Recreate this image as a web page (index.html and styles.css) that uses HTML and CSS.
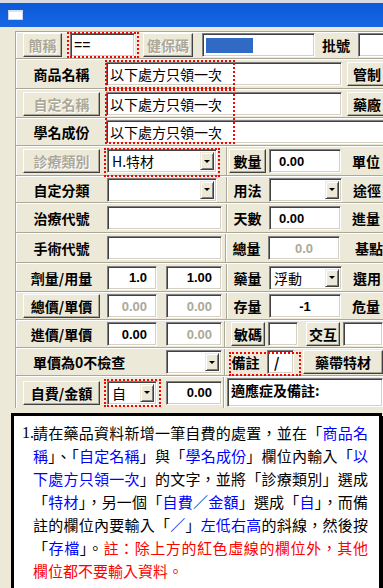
FILE: index.html
```html
<!DOCTYPE html>
<html lang="zh-Hant">
<head>
    <meta charset="UTF-8">
    <meta name="viewport" content="width=device-width, initial-scale=1.0">
    <title>藥品資料</title>
    <link rel="stylesheet" href="styles.css">
</head>
<body>
    <div class="top-strip"></div>
    <div class="titlebar"><span class="win-icon"></span></div>

    <div class="form">
        <div class="row r0">
            <div class="btn dis short-btn">簡稱</div>
            <div class="inp code-inp">==</div>
            <div class="btn dis nhi-btn">健保碼</div>
            <div class="inp nhi-inp"><span class="hl"></span></div>
            <div class="lbl batch-lbl">批號</div>
            <div class="inp batch-inp"></div>
        </div>

        <div class="row r1">
            <div class="lbl name-lbl">商品名稱</div>
            <div class="inp name-inp">以下處方只領一次</div>
            <div class="btn side-btn">管制</div>
        </div>
        <div class="row r2">
            <div class="btn dis name-lbl">自定名稱</div>
            <div class="inp name-inp">以下處方只領一次</div>
            <div class="btn side-btn">藥廠</div>
        </div>
        <div class="row r3">
            <div class="lbl name-lbl">學名成份</div>
            <div class="inp name-inp wide">以下處方只領一次</div>
        </div>

        <div class="row r4">
            <div class="left">
                <div class="btn dis name-lbl">診療類別</div>
                <div class="sel long-sel"><span class="sel-text">H.特材</span><span class="arrow"></span></div>
            </div>
            <div class="right">
                <div class="btn qty-btn">數量</div>
                <div class="inp qty-inp num">0.00</div>
                <div class="lbl tail-lbl">單位</div>
            </div>
        </div>
        <div class="row r5">
            <div class="left">
                <div class="lbl name-lbl">自定分類</div>
                <div class="sel long-sel"><span class="sel-text"></span><span class="arrow"></span></div>
            </div>
            <div class="right">
                <div class="lbl qty-lbl">用法</div>
                <div class="sel qty-sel"><span class="sel-text"></span><span class="arrow"></span></div>
                <div class="lbl tail-lbl">途徑</div>
            </div>
        </div>
        <div class="row r6">
            <div class="left">
                <div class="lbl name-lbl">治療代號</div>
                <div class="inp code-long"></div>
            </div>
            <div class="right">
                <div class="lbl qty-lbl">天數</div>
                <div class="inp qty-inp num">0.00</div>
                <div class="lbl tail-lbl">進量</div>
            </div>
        </div>
        <div class="row r7">
            <div class="left">
                <div class="lbl name-lbl">手術代號</div>
                <div class="inp code-long"></div>
            </div>
            <div class="right">
                <div class="lbl qty-lbl">總量</div>
                <div class="inp qty-inp num off center">0.0</div>
                <div class="lbl tail-lbl far">基點</div>
            </div>
        </div>
        <div class="row r8">
            <div class="left">
                <div class="lbl name-lbl">劑量/用量</div>
                <div class="inp pair-a num end">1.0</div>
                <div class="inp pair-b num end">1.00</div>
            </div>
            <div class="right">
                <div class="lbl qty-lbl">藥量</div>
                <div class="sel qty-sel"><span class="sel-text">浮動</span><span class="arrow"></span></div>
                <div class="lbl tail-lbl">選用</div>
            </div>
        </div>
        <div class="row r9">
            <div class="left">
                <div class="btn name-lbl">總價/單價</div>
                <div class="inp pair-a num end off">0.00</div>
                <div class="inp pair-b num end off">0.00</div>
            </div>
            <div class="right">
                <div class="lbl qty-lbl">存量</div>
                <div class="inp qty-inp num center">-1</div>
                <div class="lbl tail-lbl">危量</div>
            </div>
        </div>
        <div class="row r10">
            <div class="left">
                <div class="lbl name-lbl">進價/單價</div>
                <div class="inp pair-a num end">0.00</div>
                <div class="inp pair-b num end off">0.00</div>
            </div>
            <div class="right">
                <div class="btn allergy-btn">敏碼</div>
                <div class="inp allergy-inp"></div>
                <div class="btn inter-btn">交互</div>
                <div class="inp inter-inp"></div>
            </div>
        </div>
        <div class="row r11">
            <div class="left">
                <div class="lbl check-lbl">單價為0不檢查</div>
                <div class="sel pair-b"><span class="sel-text"></span><span class="arrow"></span></div>
            </div>
            <div class="right">
                <div class="lbl memo-lbl">備註</div>
                <div class="inp memo-inp">/</div>
                <div class="btn tape-btn">藥帶特材</div>
            </div>
        </div>
        <div class="row r12">
            <div class="left">
                <div class="btn name-lbl">自費/金額</div>
                <div class="sel pair-a"><span class="sel-text">自</span><span class="arrow"></span></div>
                <div class="inp pair-b num end">0.00</div>
            </div>
            <div class="right">
                <div class="inp note-area">適應症及備註:</div>
            </div>
        </div>
    </div>

    <!-- 紅色虛線框 -->
    <div class="mark mark-code"></div>
    <div class="mark mark-name"></div>
    <div class="mark mark-generic"></div>
    <div class="mark mark-type"></div>
    <div class="mark mark-memo"></div>
    <div class="mark mark-self"></div>

    <div class="note">
        <span class="note-no">1.</span>
        <div class="note-lines">
            <div class="line">請在藥品資料新增一筆自費的處置，並在「<b>商品名</b></div>
            <div class="line"><b>稱</b>」、「<b>自定名稱</b>」與「<b>學名成份</b>」欄位內輸入「<b>以</b></div>
            <div class="line"><b>下處方只領一次</b>」的文字，並將「診療類別」選成</div>
            <div class="line">「<b>特材</b>」，另一個「<b>自費／金額</b>」選成「<b>自</b>」，而備</div>
            <div class="line">註的欄位內要輸入「<b>／</b>」<b>左低右高</b>的斜線，然後按</div>
            <div class="line">「<b>存檔</b>」。<i>註：除上方的紅色虛線的欄位外，其他</i></div>
            <div class="line last"><i>欄位都不要輸入資料。</i></div>
        </div>
    </div>
</body>
</html>
```

FILE: styles.css
```css
body {
    margin: 0;
    width: 383px;
    height: 588px;
    overflow: hidden;
    position: relative;
    background-color: #ece9d8;
    font-family: "Noto Sans CJK TC", "Liberation Sans", sans-serif;
    font-size: 14px;
    color: #000;
}

.top-strip {
    height: 3px;
    background-color: #d8dbe4;
}

.titlebar {
    height: 24px;
    background: linear-gradient(#0a5bd9, #1866e4);
    display: flex;
    align-items: center;
    padding-left: 8px;
}

.win-icon {
    width: 13px;
    height: 7px;
    background-color: #fff;
    border: 1px solid #c9d3ea;
    border-top: 2px solid #d7e0f4;
}

.form {
    margin: 4px 0 0 15px;
    border-top: 1px solid #aca899;
    border-left: 1px solid #aca899;
    box-shadow: inset 1px 1px #fff;
}

.row {
    display: flex;
    align-items: center;
    box-sizing: border-box;
    box-shadow: inset 0 -1px #fff, inset 0 -2px #aca899;
    padding-bottom: 2px;
}

.r0 { height: 28px; }
.r1 { height: 30px; }
.r2 { height: 29px; }
.r3 { height: 28px; }
.r4 { height: 30px; }
.r5 { height: 27px; }
.r6 { height: 30px; }
.r7 { height: 30px; }
.r8 { height: 29px; }
.r9 { height: 28px; }
.r10 { height: 28px; }
.r11 { height: 28px; }
.r12 { height: 31px; box-shadow: none; padding-bottom: 0; }

.left {
    width: 210px;
    height: 100%;
    display: flex;
    align-items: center;
}

.right {
    flex: 1;
    height: 100%;
    display: flex;
    align-items: center;
    border-left: 1px solid #aca899;
    box-shadow: inset 1px 0 #fff;
}

/* 控制項 */
.btn {
    height: 24px;
    box-sizing: border-box;
    border: 1px solid;
    border-color: #fff #404040 #404040 #fff;
    box-shadow: inset -1px -1px #aca899;
    background-color: #ece9d8;
    font-weight: bold;
    display: flex;
    align-items: center;
    justify-content: center;
    white-space: nowrap;
    overflow: hidden;
    flex-shrink: 0;
}

.btn.dis {
    color: #aca899;
    text-shadow: 1px 1px #fff;
}

.lbl {
    font-weight: bold;
    white-space: nowrap;
    flex-shrink: 0;
    text-align: center;
}

.inp {
    height: 24px;
    box-sizing: border-box;
    background-color: #fff;
    border: 1px solid;
    border-color: #808080 #fff #fff #808080;
    box-shadow: inset 1px 1px #404040, inset -1px -1px #d4d0c8;
    padding: 0 3px;
    display: flex;
    align-items: center;
    white-space: nowrap;
    overflow: hidden;
    flex-shrink: 0;
}

.num {
    font-family: "Liberation Sans", sans-serif;
    font-weight: bold;
    font-size: 13px;
    padding-left: 9px;
}

.num.end {
    justify-content: flex-end;
    padding-right: 9px;
}

.num.center {
    justify-content: center;
    padding-left: 3px;
}

.off {
    color: #aca899;
}

.sel {
    height: 24px;
    box-sizing: border-box;
    background-color: #fff;
    border: 1px solid;
    border-color: #808080 #fff #fff #808080;
    box-shadow: inset 1px 1px #404040, inset -1px -1px #d4d0c8;
    display: flex;
    align-items: center;
    padding: 2px;
    flex-shrink: 0;
}

.sel-text {
    flex: 1;
    padding-left: 2px;
    white-space: nowrap;
}

.arrow {
    width: 14px;
    height: 18px;
    box-sizing: border-box;
    border: 1px solid;
    border-color: #ece9d8 #404040 #404040 #ece9d8;
    box-shadow: inset 1px 1px #fff, inset -1px -1px #808080;
    background-color: #ece9d8;
    display: flex;
    align-items: center;
    justify-content: center;
}

.arrow::after {
    content: "";
    border-left: 3px solid transparent;
    border-right: 3px solid transparent;
    border-top: 3px solid #000;
}

/* 位置與寬度 */
.short-btn { width: 39px; margin-left: 7px; }
.code-inp { width: 65px; margin-left: 8px; font-family: "Liberation Sans", sans-serif; }
.nhi-btn { width: 50px; margin-left: 8px; }
.nhi-inp { width: 113px; margin-left: 9px; }
.batch-lbl { margin-left: 5px; width: 32px; }
.batch-inp { width: 40px; margin-left: 6px; }

.hl {
    width: 47px;
    height: 15px;
    background-color: #316ac5;
}

.name-lbl { width: 77px; margin-left: 7px; }
.name-inp { width: 236px; margin-left: 6px; }
.name-inp.wide { width: 280px; }
.side-btn { width: 40px; margin-left: 5px; }

.long-sel { width: 110px; margin-left: 7px; }
.code-long { width: 115px; margin-left: 7px; }
.pair-a { width: 50px; margin-left: 7px; }
.pair-b { width: 56px; margin-left: 9px; }
.check-lbl { width: 133px; margin-left: 17px; text-align: left; }
.check-lbl + .pair-b { margin-left: 0; }

.qty-btn { width: 37px; margin-left: 2px; }
.qty-lbl { width: 37px; margin-left: 2px; }
.qty-inp { width: 72px; margin-left: 3px; }
.qty-sel { width: 73px; margin-left: 3px; }
.tail-lbl { margin-left: 11px; }
.tail-lbl.far { margin-left: 15px; }

.allergy-btn { width: 34px; margin-left: 6px; }
.allergy-inp { width: 30px; margin-left: 3px; }
.inter-btn { width: 34px; margin-left: 8px; }
.inter-inp { width: 40px; margin-left: 3px; }

.memo-lbl { width: 37px; margin-left: 2px; }
.memo-inp { width: 27px; margin-left: 3px; font-weight: bold; padding-left: 6px; }
.tape-btn { width: 80px; margin-left: 9px; }

.note-area {
    width: 156px;
    height: 29px;
    margin-left: 3px;
    align-items: flex-start;
    font-weight: bold;
    padding-top: 1px;
}

/* 紅色虛線框 */
.mark {
    position: absolute;
    border: 2px dotted #f00;
    box-sizing: border-box;
}

.mark-code { left: 67px; top: 32px; width: 72px; height: 26px; }
.mark-name { left: 105px; top: 60px; width: 130px; height: 29px; }
.mark-generic { left: 105px; top: 89px; width: 130px; height: 55px; }
.mark-type { left: 104px; top: 148px; width: 116px; height: 29px; }
.mark-memo { left: 229px; top: 352px; width: 72px; height: 24px; }
.mark-self { left: 104px; top: 379px; width: 57px; height: 28px; }

/* 說明框 */
.note {
    position: absolute;
    left: 11px;
    top: 413px;
    width: 365px;
    height: 169px;
    background-color: #fff;
    border: 3px solid #000;
    box-shadow: 3px 3px 0 #000;
    display: flex;
    padding-top: 5px;
    box-sizing: content-box;
}

.note-no {
    font-family: "Liberation Serif", serif;
    font-size: 16px;
    line-height: 23px;
    width: 11px;
    margin-left: 8px;
}

.note-lines {
    width: 335px;
    font-size: 15px;
    line-height: 23px;
}

.line {
    white-space: nowrap;
    text-align: justify;
    text-align-last: justify;
}

.line.last {
    text-align-last: left;
}

.line b {
    font-weight: normal;
    color: #00f;
}

.line i {
    font-style: normal;
    color: #f00;
}
```
